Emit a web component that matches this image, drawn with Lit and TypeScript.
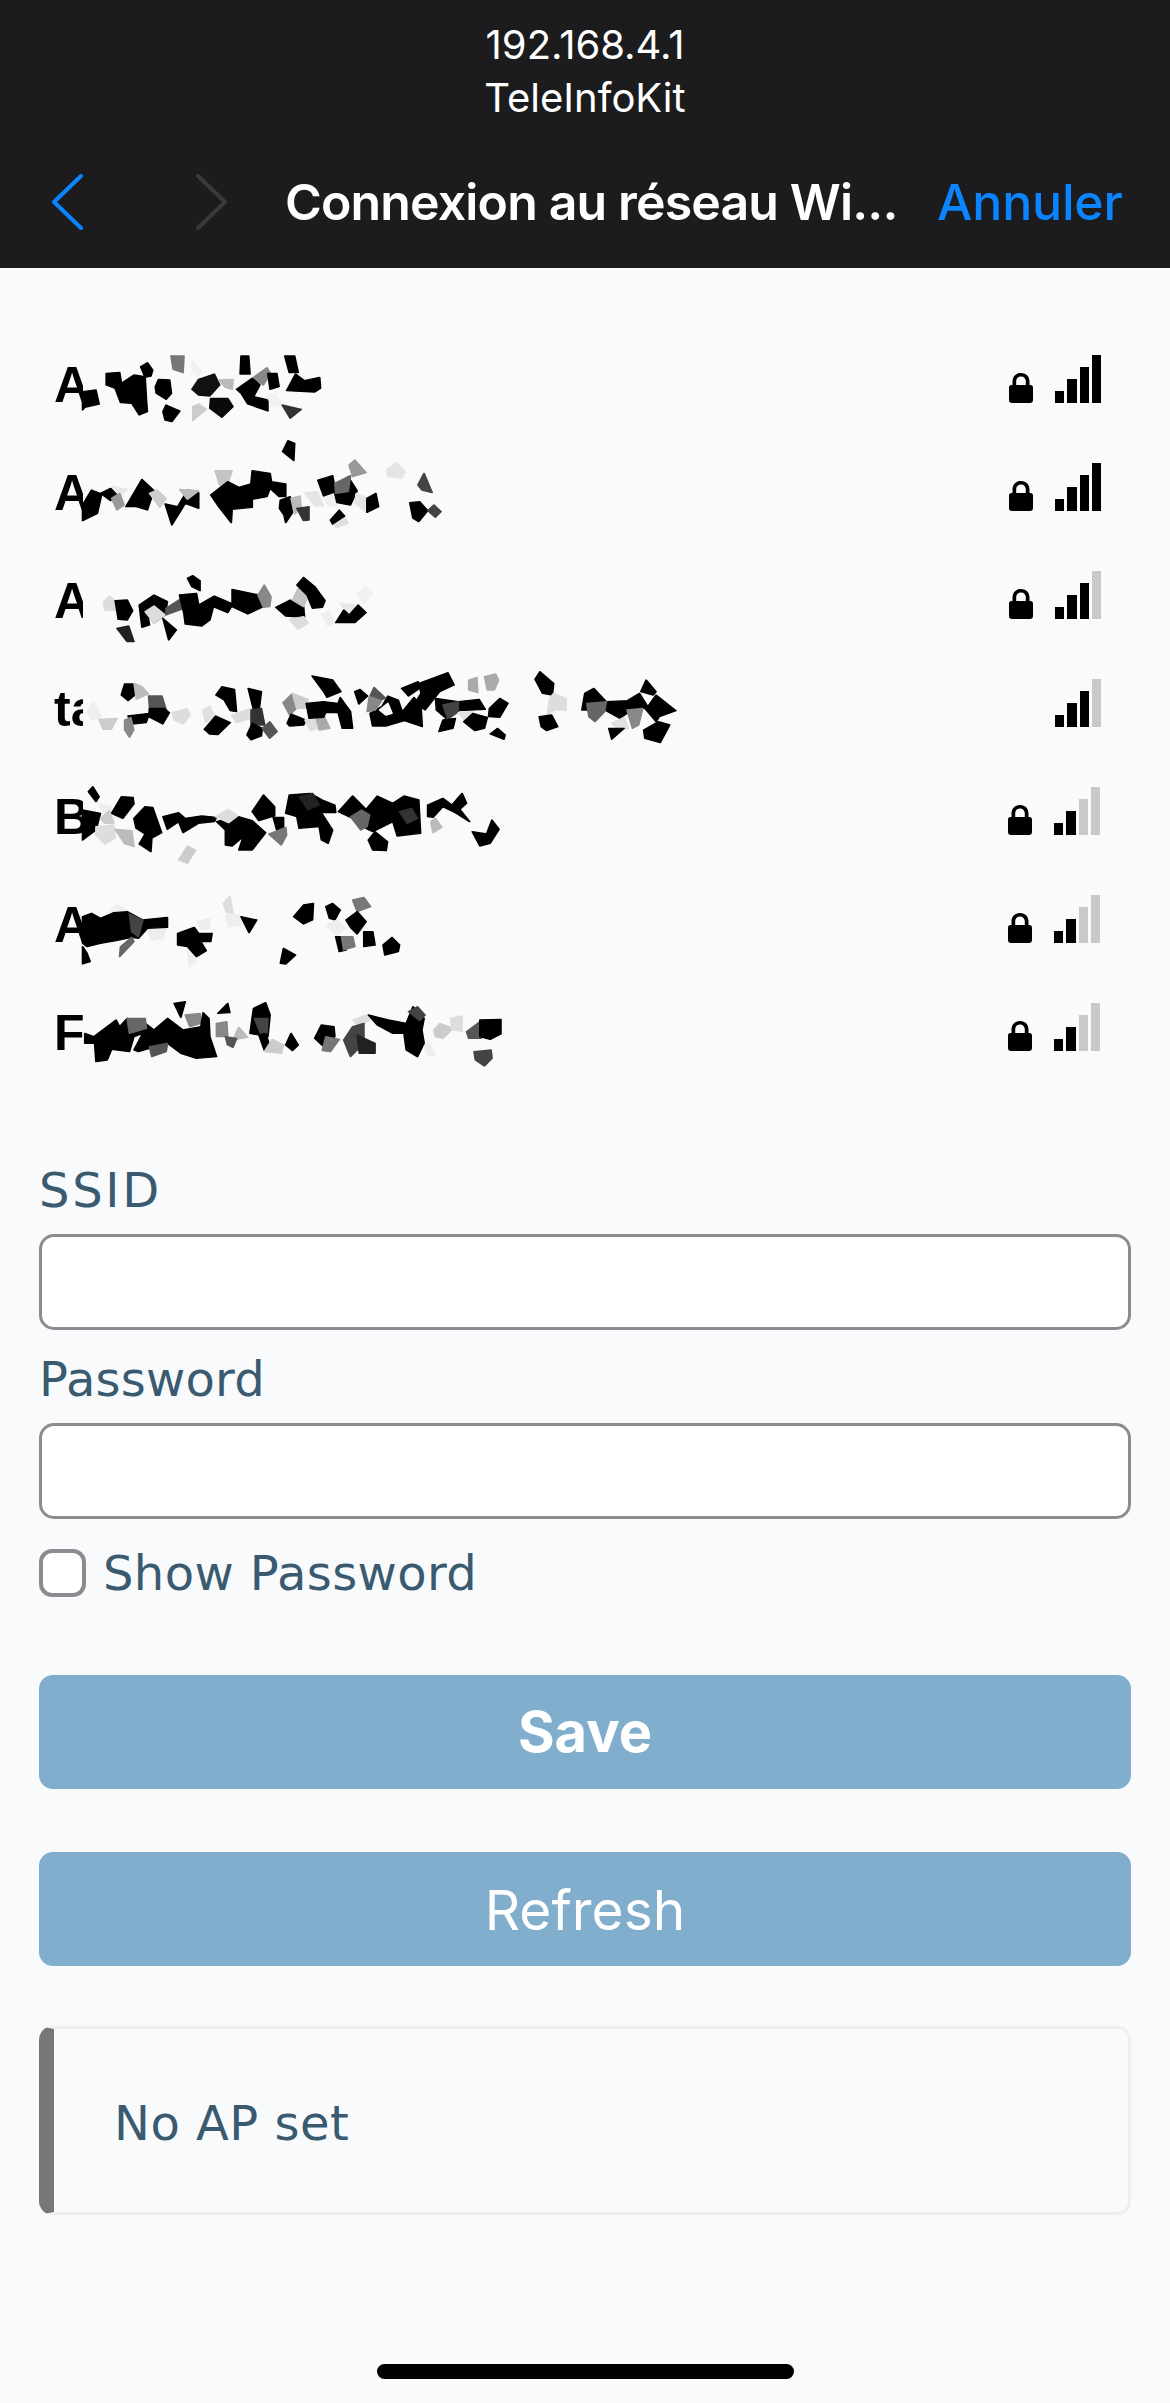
import { LitElement, html, css, svg } from "lit";
import { customElement } from "lit/decorators.js";

type Poly = [string, string];

const GROUP_A: Poly[] = [
  ["#000","185,185 215,180 222,222 190,232 185,240"],
  ["#000","238,130 268,127 272,160 300,135 325,140 328,210 330,245 312,255 295,220 270,218 258,175 238,165"],
  ["#000","315,110 330,98 342,120 338,138 325,142"],
  ["#000","348,170 355,148 380,150 384,190 372,208 350,190"],
  ["#000","372,225 403,243 385,275 370,270 365,245"],
  ["#777","383,78 412,78 410,128 388,118"],
  ["#f0f1f3","430,92 452,125 445,138 432,120"],
  ["#ccc","432,230 445,222 462,238 432,272"],
  ["#111","430,178 445,148 480,132 492,165 470,198 445,195"],
  ["#bbb","490,150 522,148 520,178 505,172"],
  ["#0a0a0a","472,205 510,205 522,230 497,262 470,235"],
  ["#000","540,78 557,78 560,132 538,132"],
  ["#000","638,78 660,78 668,128 648,128"],
  ["#888","565,145 598,113 606,130 590,165"],
  ["#000","600,130 620,130 625,170 605,178"],
  ["#000","530,178 565,145 582,165 568,200 600,210 600,243 555,222 540,190"],
  ["#000","642,182 662,132 682,152 716,142 718,175 705,186"],
  ["#f0f1f3","598,200 615,190 632,222 612,230"],
  ["#333","632,225 675,238 650,265"],
  ["#000","633,365 645,332 660,340 658,392"],
  ["#000","185,525 205,480 228,492 218,550 185,572"],
  ["#000","225,490 248,475 262,495 248,512"],
  ["#e8e8e8","252,470 285,478 270,498"],
  ["#999","250,505 268,490 278,525 262,540"],
  ["#000","282,530 318,448 345,482 330,540 305,530"],
  ["#ccc","335,490 352,480 372,505 358,532"],
  ["#000","370,522 398,530 420,480 445,488 445,535 415,520 385,585"],
  ["#bbb","402,478 445,482 420,508"],
  ["#c4c4c4","482,422 520,422 510,462 492,465"],
  ["#000","472,495 510,455 535,472 562,462 565,422 605,430 608,455 640,462 640,500 625,500 605,475 598,500 565,508 565,532 520,538 518,578 490,530"],
  ["#000","628,510 650,500 655,548 640,578 636,555 626,535"],
  ["#bbb","652,505 672,498 675,535 660,552"],
  ["#333","665,535 692,530 692,570 680,572"],
  ["#e5e5e5","682,488 710,485 725,528 705,528"],
  ["#eee","720,495 745,490 755,530 735,525"],
  ["#000","712,450 745,437 752,485 725,498"],
  ["#000","780,440 800,482 785,525 755,518 750,490"],
  ["#666","750,460 785,437 780,485 752,490"],
  ["#999","782,405 795,390 820,428 790,440"],
  ["#e5e5e5","798,490 825,505 820,545 795,520"],
  ["#000","822,505 842,490 848,530 822,547"],
  ["#e5e5e5","865,420 888,398 908,425 900,445 870,440"],
  ["#444","936,465 950,430 968,488 945,480"],
  ["#000","918,518 940,515 958,542 938,575 925,565"],
  ["#444","958,542 972,525 988,545 975,562"],
  ["#e0e0e0","745,585 770,555 780,580 755,592"],
  ["#000","740,570 760,540 772,558 745,582"],
  ["#ddd","232,815 245,798 260,815 258,842 235,840"],
  ["#000","258,812 285,810 297,842 285,870 265,868"],
  ["#222","262,895 288,888 300,935 285,935"],
  ["#000","312,825 345,795 375,815 370,855 345,878 330,850 335,885 318,892"],
  ["#ddd","325,845 345,828 370,855 345,878"],
  ["#555","372,835 412,800 412,835 372,855"],
  ["#000","365,865 395,900 378,930"],
  ["#000","420,745 432,737 448,752 448,782 430,770"],
  ["#000","402,795 440,790 445,825 480,798 522,822 510,848 478,830 470,870 452,888 415,882 412,850"],
  ["#000","520,778 580,795 590,830 555,852 520,830"],
  ["#888","578,795 592,765 607,800 604,830 590,832"],
  ["#000","618,832 650,810 680,830 682,862 640,858"],
  ["#c4c4c4","655,810 668,775 690,795 680,830"],
  ["#000","665,765 680,742 705,770 728,812 722,832 700,835 688,795"],
  ["#ddd","648,868 680,860 690,880 668,898"],
  ["#eee","720,852 735,845 752,878 735,888"],
  ["#e8e8e8","762,820 795,825 780,855"],
  ["#000","752,878 770,840 782,855 802,825 820,848 795,878"],
  ["#f0f1f3","798,792 818,770 835,790 815,820"],
];

const GROUP_B: Poly[] = [
  ["#000","198,305 208,290 222,320 215,335"],
  ["#000","250,370 272,320 298,322 300,342 275,385"],
  ["#eee","220,340 250,350 240,380"],
  ["#000","185,360 225,370 215,420 185,450"],
  ["#ccc","225,385 245,362 255,400 235,400"],
  ["#ddd","215,410 255,405 258,445 235,462 215,435"],
  ["#bbb","258,418 295,422 300,470 280,462"],
  ["#000","300,385 325,350 342,352 362,428 340,445 338,485 312,462 325,432 305,415"],
  ["#000","365,380 400,368 415,385 452,378 485,382 480,395 445,400 410,428 400,395 375,418"],
  ["#000","485,395 530,378 565,392 595,428 565,480 535,480 545,440 520,468 505,465 505,420"],
  ["#ddd","482,380 512,358 532,378 512,398"],
  ["#ccc","400,510 420,468 438,480 420,520"],
  ["#000","565,365 590,315 615,350 615,378 580,392"],
  ["#000","612,382 635,382 635,415 620,420"],
  ["#777","602,432 640,412 642,435 630,465"],
  ["#000","640,370 648,315 695,310 722,330 750,345 752,368 720,368 745,420 735,460 720,450 715,410 670,415 665,380"],
  ["#222","670,320 700,310 715,345 690,360"],
  ["#000","758,365 790,318 820,358 845,318 880,340 905,318 938,330 942,430 890,438 880,395 835,425 820,415 790,385"],
  ["#666","785,380 810,360 828,375 822,410 808,420"],
  ["#333","895,365 922,355 935,385 912,400"],
  ["#000","825,450 840,425 868,455 865,482 835,480"],
  ["#bbb","965,395 975,385 990,412 970,428"],
  ["#000","958,345 992,325 1012,345 1035,310 1045,340 1030,358 1052,395 1020,368 992,350 970,382 958,380"],
  ["#000","1058,425 1090,432 1102,390 1118,418 1098,460 1075,468"],
  ["#ddd","500,640 515,618 522,670 508,668"],
  ["#eee","505,675 535,675 540,705 512,710"],
  ["#000","540,680 575,690 558,728"],
  ["#000","658,680 680,645 702,640 700,690 680,702"],
  ["#000","730,650 745,640 762,660 750,690 738,685"],
  ["#777","790,630 815,622 830,650 800,665"],
  ["#eee","730,705 755,690 775,715 755,735"],
  ["#000","775,690 800,665 820,695 800,732 785,712"],
  ["#000","752,740 775,740 775,780 760,785"],
  ["#777","765,740 790,740 795,770 770,780"],
  ["#000","815,725 835,725 840,765 815,770"],
  ["#000","858,765 878,742 895,765 892,785 862,795"],
  ["#000","628,820 635,775 662,795 640,822"],
  ["#eee","245,660 262,645 285,660 270,675"],
  ["#eee","330,715 372,712 365,745 340,752"],
  ["#000","185,680 205,670 225,685 255,668 285,665 320,690 375,682 375,712 330,715 310,745 295,742 260,752 225,760 195,770 185,760"],
  ["#444","290,672 320,690 310,740 295,725"],
  ["#666","270,770 295,742 300,755 268,800"],
  ["#000","185,770 195,790 202,815 185,822"],
  ["#eee","420,780 435,790 440,815 425,830"],
  ["#000","398,730 435,712 445,730 475,730 472,755 450,755 462,782 440,800 420,770 398,765"],
  ["#eee","442,695 470,685 470,715 450,720"],
  ["#000","390,940 415,935 405,982"],
  ["#888","415,975 448,970 450,1000 425,1010"],
  ["#000","190,1030 210,1040 260,990 268,1010 285,985 325,1000 345,1020 375,985 410,1020 450,1010 455,968 468,985 470,1040 485,1100 440,1105 405,1090 375,1060 335,1075 310,1085 300,1080 320,1030 300,1040 290,1085 250,1078 240,1110 215,1115 212,1060 190,1060"],
  ["#666","285,985 325,985 328,1015 290,1030"],
  ["#555","335,1070 375,1060 372,1085 340,1100"],
  ["#888","485,1000 508,995 510,1040 485,1040"],
  ["#000","488,970 510,940 515,968"],
  ["#bbb","525,1040 535,1012 555,1042 530,1048"],
  ["#555","505,1040 530,1045 522,1072 510,1065"],
  ["#000","560,1030 568,955 595,938 605,975 600,1040"],
  ["#444","570,985 600,985 598,1030 585,1035"],
  ["#000","580,1035 595,1030 605,1070 592,1080"],
  ["#ccc","592,1085 610,1048 635,1065 630,1090"],
  ["#000","640,1065 652,1030 668,1065 655,1082"],
  ["#000","705,1045 720,1005 748,1010 750,1040 725,1070"],
  ["#777","730,1040 760,1048 740,1085 722,1082"],
  ["#ddd","790,990 820,975 828,990 805,1010"],
  ["#444","770,1050 790,1010 815,1000 815,1060 785,1100"],
  ["#222","800,1035 840,1060 840,1090 805,1090"],
  ["#000","825,975 870,990 910,1000 925,950 950,985 945,1020 950,1060 935,1100 910,1080 905,1030 880,1030 845,1005"],
  ["#444","915,965 935,950 952,975 940,992"],
  ["#eee","950,1070 960,1055 975,1095 960,1095"],
  ["#ccc","972,1020 985,1000 1015,1015 992,1045 975,1040"],
  ["#ddd","1010,985 1035,978 1035,1025 1012,1018"],
  ["#555","1045,1025 1078,992 1078,1045 1050,1045"],
  ["#000","1075,990 1122,988 1122,1032 1098,1048 1075,1040"],
  ["#444","1062,1085 1100,1080 1102,1105 1085,1128 1065,1110"],
];

const GROUP_C: Poly[] = [
  ["#eee","90,155 105,125 125,170 100,180"],
  ["#ccc","118,178 162,175 148,208 128,208"],
  ["#000","172,105 180,72 205,72 205,105 188,122"],
  ["#bbb","203,70 222,80 238,102 208,118"],
  ["#555","238,108 270,108 280,148 240,145"],
  ["#000","188,168 240,160 232,188 198,192"],
  ["#000","240,145 275,145 288,158 272,192 238,170"],
  ["#888","180,180 195,172 202,210 192,232 180,210"],
  ["#ddd","295,158 330,145 338,165 322,192 300,180"],
  ["#e0e0e0","368,150 385,138 398,170 375,188"],
  ["#000","400,105 415,80 445,88 450,155 435,152 420,120"],
  ["#000","372,208 400,168 435,188 405,224 385,222"],
  ["#000","478,85 510,95 505,145 490,145"],
  ["#ddd","438,165 485,145 485,175 450,188"],
  ["#333","485,150 510,145 518,195 485,195"],
  ["#000","475,225 488,190 512,205 510,228 485,240"],
  ["#555","512,205 530,185 548,215 530,235"],
  ["#888","562,128 585,100 595,145 578,165"],
  ["#ccc","585,100 622,118 618,145 595,145"],
  ["#000","572,190 582,162 618,180 612,195 578,198"],
  ["#ddd","615,180 640,172 648,205 628,212"],
  ["#aaa","642,175 662,170 675,205 650,210"],
  ["#000","618,130 660,125 695,130 700,112 725,155 730,205 705,205 695,158 665,158 660,172 625,175"],
  ["#000","632,48 682,60 702,95 668,112 660,95"],
  ["#000","735,95 748,88 766,108 745,132"],
  ["#000","772,160 800,140 815,108 840,120 850,155 878,112 895,135 898,200 855,182 810,198 778,198"],
  ["#f9fafc","795,150 815,130 825,160 810,165"],
  ["#555","772,108 782,82 810,115 790,122"],
  ["#888","770,110 800,122 785,150 765,155"],
  ["#000","848,85 888,65 892,85 865,108"],
  ["#000","890,70 960,38 975,75 940,95 905,150 880,130 895,100"],
  ["#aaa","1010,60 1030,52 1032,98 1010,90"],
  ["#aaa","1048,50 1075,42 1082,60 1072,90 1055,90"],
  ["#000","930,115 985,125 1035,118 1050,148 985,152 955,175 932,150"],
  ["#444","948,135 985,125 985,155 960,178"],
  ["#000","938,215 948,180 978,175 972,205"],
  ["#e0e0e0","985,158 1020,155 1000,180"],
  ["#000","998,185 1020,160 1055,172 1048,205 1025,212"],
  ["#000","1060,145 1085,115 1105,130 1085,172 1058,170"],
  ["#000","1062,222 1080,205 1098,225 1095,238"],
  ["#000","1170,58 1182,35 1215,70 1212,105 1188,100"],
  ["#ddd","1205,115 1215,100 1245,115 1245,150 1215,150 1200,165"],
  ["#000","1180,170 1210,165 1225,200 1198,212 1185,200"],
  ["#000","1283,150 1290,100 1312,85 1342,125 1392,122 1422,100 1442,140 1462,105 1510,152 1470,170 1462,185 1435,145 1410,145 1375,175 1338,150"],
  ["#666","1295,130 1342,125 1338,155 1315,185 1300,170"],
  ["#000","1425,95 1438,60 1462,95 1455,105"],
  ["#888","1392,150 1430,145 1420,195 1405,205"],
  ["#e0e0e0","1355,190 1385,172 1395,205 1375,212"],
  ["#000","1348,205 1385,205 1355,238"],
  ["#000","1432,210 1468,185 1495,195 1472,248 1435,235"],
];

const NETWORKS = [
  { name: "A", locked: true, level: 4, low: false },
  { name: "A", locked: true, level: 4, low: false },
  { name: "A", locked: true, level: 3, low: false },
  { name: "ta", locked: false, level: 3, low: false },
  { name: "B", locked: true, level: 2, low: true },
  { name: "A", locked: true, level: 2, low: true },
  { name: "F", locked: true, level: 2, low: true },
];

const polys = (list: Poly[]) =>
  list.map(
    ([fill, points]) =>
      svg`<polygon fill=${fill} stroke=${fill} stroke-width="4" stroke-linejoin="round" points=${points}></polygon>`
  );

@customElement("app-root")
export class AppRoot extends LitElement {
  static styles = css`
    :host {
      display: block;
      width: 1170px;
      height: 2403px;
      background: #f9fafc;
      overflow: hidden;
      font-family: "DejaVu Sans", sans-serif;
      color: #3a5a70;
    }
    .topbar {
      height: 268px;
      box-sizing: border-box;
      background: #1c1c1e;
      color: #fff;
      font-family: Inter, sans-serif;
      display: flex;
      flex-direction: column;
      padding-top: 18px;
    }
    .addr {
      text-align: center;
      font-size: 40px;
      line-height: 53px;
      height: 53px;
    }
    .nav {
      margin-top: 45px;
      height: 66px;
      display: flex;
      align-items: center;
      padding-left: 51px;
    }
    .nav svg { display: block; }
    .fwd { margin-left: 113px; }
    .title {
      margin-left: 57px;
      font-size: 50px;
      font-weight: 600;
      letter-spacing: -0.85px;
      white-space: nowrap;
      width: 652px;
    }
    .cancel {
      font-size: 50px;
      font-weight: 500;
      letter-spacing: -0.2px;
      color: #0a84ff;
      white-space: nowrap;
    }
    .list {
      position: relative;
      padding-top: 63px;
    }
    .row {
      height: 108px;
      display: flex;
      align-items: center;
      justify-content: space-between;
      padding: 0 69px 0 54px;
    }
    .name {
      font-family: "Liberation Sans", sans-serif;
      font-weight: 700;
      font-size: 50px;
      color: #000;
      white-space: nowrap;
      clip-path: inset(0 calc(100% - 29px) 0 0);
    }
    .signal {
      display: flex;
      align-items: flex-end;
      margin-bottom: 12px;
    }
    .signal.low { margin-right: 1px; }
    .lock { display: block; margin-right: 22px; }
    .lock.none { visibility: hidden; }
    .bars {
      display: flex;
      align-items: flex-end;
      gap: 3px;
    }
    .bar { width: 9.25px; background: #c8c9c9; }
    .bar.on { background: #000; }
    .b1 { height: 12px; }
    .b2 { height: 24px; }
    .b3 { height: 36px; }
    .b4 { height: 48px; }
    .mask {
      position: absolute;
      display: block;
      overflow: hidden;
    }
    .ma { left: 0; top: 62px; width: 700px; height: 360px; }
    .mb { left: 0; top: 422px; width: 700px; height: 400px; }
    .mc { left: 50px; top: 392px; width: 650px; height: 90px; }
    form {
      display: flex;
      flex-direction: column;
      padding: 73px 39px 0;
    }
    label {
      font-size: 48px;
      line-height: 60px;
      letter-spacing: 0.2px;
    }
    label.caps { letter-spacing: 2.7px; }
    label.inline { letter-spacing: 0.4px; }
    .field {
      box-sizing: border-box;
      display: block;
      width: 1092px;
      height: 96px;
      margin: 14px 0 19px;
      border: 3px solid #8c8c90;
      border-radius: 15px;
      background: #fff;
      outline: none;
      padding: 0;
    }
    .field.second { margin: 14px 0 0; }
    .show {
      display: flex;
      align-items: center;
      margin-top: 30px;
      height: 48px;
    }
    .check {
      appearance: none;
      -webkit-appearance: none;
      box-sizing: border-box;
      width: 47px;
      height: 48px;
      margin: 0 17px 0 0;
      border: 4px solid #8c8c90;
      border-radius: 13px;
      background: #fff;
    }
    button {
      display: block;
      width: 1092px;
      height: 114px;
      border: none;
      border-radius: 14px;
      background: #81aecc;
      color: #fff;
      font-family: Inter, sans-serif;
      font-size: 56px;
      padding: 0;
    }
    .save { margin-top: 78px; font-weight: 700; }
    .refresh { margin-top: 63px; font-weight: 400; font-size: 55px; padding-top: 2px; }
    .card {
      box-sizing: border-box;
      width: 1092px;
      height: 189px;
      margin: 60px 0 0 39px;
      border: 3px solid #eeeff1;
      border-left: 15px solid #777;
      border-radius: 14px;
      padding: 4px 0 0 60px;
      display: flex;
      align-items: center;
      font-size: 48px;
      letter-spacing: 0.5px;
    }
    .home {
      width: 417px;
      height: 15px;
      margin: 149px auto 0;
      background: #000;
      border-radius: 8px;
    }
  `;

  render() {
    return html`
      <header class="topbar">
        <div class="addr">192.168.4.1</div>
        <div class="addr">TeleInfoKit</div>
        <div class="nav">
          <svg width="32" height="56" viewBox="0 0 32 56" fill="none" stroke="#0a84ff" stroke-width="4" stroke-linecap="round" stroke-linejoin="round">
            <path d="M30 2 L3 28 L30 54"></path>
          </svg>
          <svg class="fwd" width="32" height="56" viewBox="0 0 32 56" fill="none" stroke="#3a3a3c" stroke-width="4" stroke-linecap="round" stroke-linejoin="round">
            <path d="M2 2 L29 28 L2 54"></path>
          </svg>
          <div class="title">Connexion au réseau Wi...</div>
          <div class="cancel">Annuler</div>
        </div>
      </header>

      <section class="list">
        ${NETWORKS.map(
          (n) => html`
            <div class="row">
              <div class="name">${n.name}</div>
              <div class="signal ${n.low ? "low" : ""}">
                <svg class="lock ${n.locked ? "" : "none"}" width="24" height="30" viewBox="0 0 24 30">
                  <path fill="#000" d="M12 0C6.5 0 3.5 3.8 3.5 8.5V12H2.5C1 12 0 13 0 14.5V27C0 28.8 1.2 30 3 30H21C22.8 30 24 28.8 24 27V14.5C24 13 23 12 21.5 12H20.5V8.5C20.5 3.8 17.5 0 12 0ZM7.2 12V8.6C7.2 5.4 9 3.4 12 3.4S16.8 5.4 16.8 8.6V12Z" fill-rule="evenodd"></path>
                </svg>
                <div class="bars">
                  ${[1, 2, 3, 4].map(
                    (b) => html`<div class="bar b${b} ${b <= n.level ? "on" : ""}"></div>`
                  )}
                </div>
              </div>
            </div>
          `
        )}
        <svg class="mask ma" viewBox="0 0 1568 1080" preserveAspectRatio="none">${polys(GROUP_A)}</svg>
        <svg class="mask mb" viewBox="0 0 1568 1200" preserveAspectRatio="none">${polys(GROUP_B)}</svg>
        <svg class="mask mc" viewBox="0 0 1568 270" preserveAspectRatio="none">${polys(GROUP_C)}</svg>
      </section>

      <form>
        <label class="caps">SSID</label>
        <input class="field" type="text" />
        <label>Password</label>
        <input class="field second" type="password" />
        <div class="show">
          <input class="check" type="checkbox" />
          <label class="inline">Show Password</label>
        </div>
        <button class="save" type="button">Save</button>
        <button class="refresh" type="button">Refresh</button>
      </form>

      <div class="card">No AP set</div>
      <div class="home"></div>
    `;
  }
}
